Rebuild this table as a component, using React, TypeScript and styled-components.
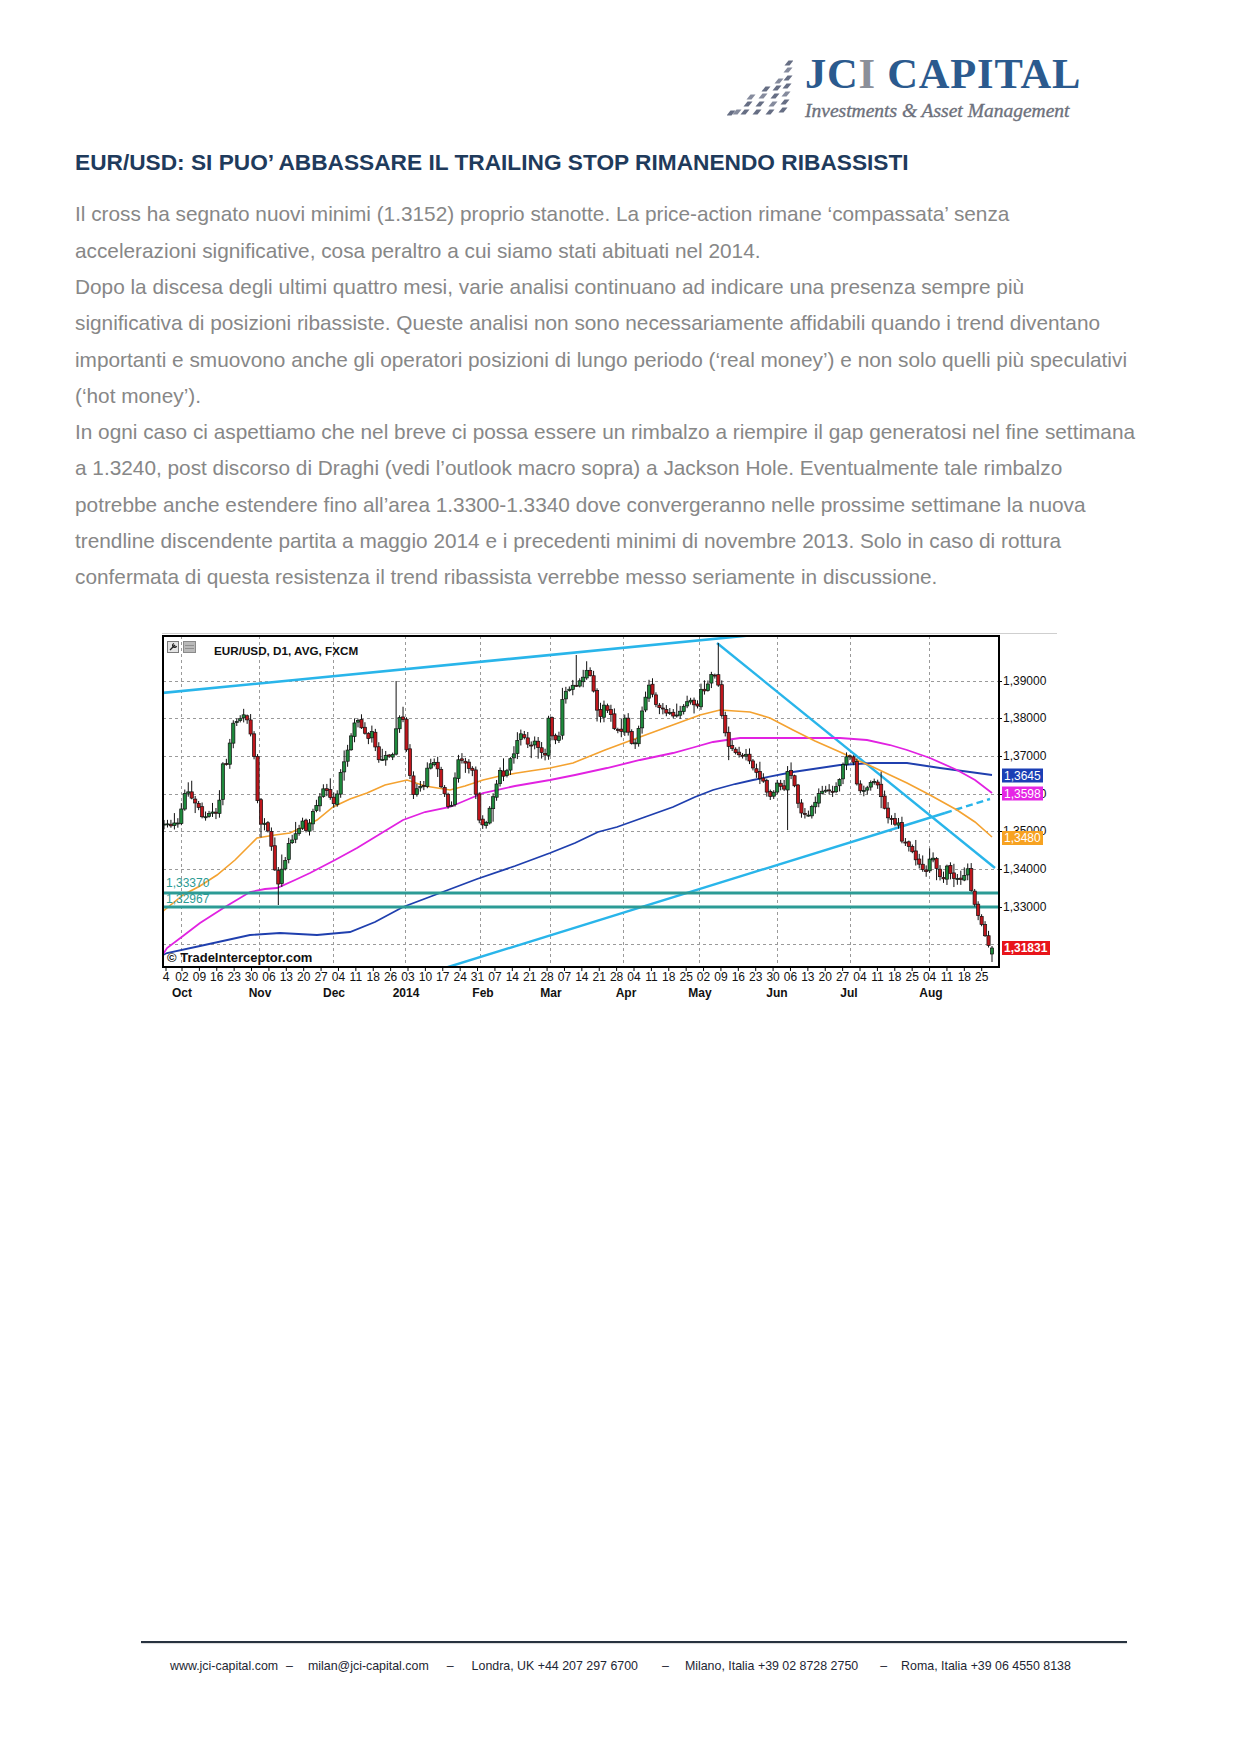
import React from "react";
import styled, { createGlobalStyle } from "styled-components";

const GlobalStyle = createGlobalStyle`
  html, body { margin: 0; padding: 0; background: #fff; }
  body { font-family: "Liberation Sans", Arial, sans-serif; }
`;

const Page = styled.div`
  width: 1240px;
  height: 1754px;
  display: flex;
  flex-direction: column;
  box-sizing: border-box;
  background: #fff;
  overflow: hidden;
`;

const Header = styled.header`
  display: flex;
  align-items: flex-start;
  gap: 12px;
  padding: 53px 0 0 727px;
`;

const LogoMark = styled.svg`
  flex: none;
  margin-top: 5px;
`;

const LogoText = styled.div`
  display: flex;
  flex-direction: column;
`;

const LogoName = styled.div`
  font-family: "Liberation Serif", "Times New Roman", serif;
  font-weight: 700;
  font-size: 42.5px;
  line-height: 42px;
  letter-spacing: 0.8px;
  color: #2b5a8e;
  white-space: nowrap;
`;

const LogoGrey = styled.span`
  color: #8b8f99;
`;

const LogoTag = styled.div`
  margin-top: 5.6px;
  font-family: "Liberation Serif", "Times New Roman", serif;
  font-style: italic;
  font-size: 19.5px;
  line-height: 20px;
  color: #6d717c;
  -webkit-text-stroke: 0.35px #6d717c;
  white-space: nowrap;
`;

const Content = styled.main`
  display: flex;
  flex-direction: column;
  padding-left: 75px;
`;

const Title = styled.h1`
  margin: 28px 0 0;
  font-size: 22.7px;
  line-height: 26px;
  font-weight: 700;
  color: #1f3b5c;
  white-space: nowrap;
`;

const Body = styled.div`
  margin-top: 21.8px;
  font-size: 20.8px;
  line-height: 36.3px;
  color: #878787;
`;

const Paragraph = styled.p`
  margin: 0;
`;

const Line = styled.span`
  display: block;
  white-space: nowrap;
`;

const ChartFigure = styled.figure`
  margin: 37.4px 0 0 87px;
  width: 895px;
  height: 372px;
`;

const Footer = styled.footer`
  margin-top: auto;
  padding: 0 0 81px 141px;
`;

const FooterRule = styled.div`
  width: 986px;
  height: 2px;
  background: #27323f;
  box-shadow: 0 1px 1px rgba(0, 0, 0, 0.15);
`;

const FooterLine = styled.div`
  margin-top: 16px;
  padding-left: 29px;
  display: flex;
  font-size: 12.4px;
  line-height: 14px;
  color: #1e2633;
  white-space: nowrap;
`;

const Sep = styled.span<{ $l: number; $r: number }>`
  margin: 0 ${(p) => p.$r}px 0 ${(p) => p.$l}px;
`;

/* ---------------- chart data ---------------- */

const X0 = 162;
const Y0 = 633;
const W = 895;
const H = 372;

type Pt = [number, number];

const PATH: Pt[] = [
  [163, 823], [165, 825], [170, 827], [175, 823], [180, 820], [183, 800], [187, 787], [192, 800], [195, 802],
  [200, 810], [203, 822], [208, 813], [215, 813], [218, 820], [222, 763], [227, 762], [232, 727], [237, 720],
  [242, 717], [247, 717], [250, 733], [253, 740], [257, 797], [260, 823], [265, 825], [270, 833], [273, 860],
  [278, 883], [282, 867], [287, 853], [290, 840], [297, 833], [302, 817], [307, 833], [313, 810], [318, 802],
  [323, 790], [328, 793], [333, 807], [337, 795], [342, 767], [347, 753], [350, 740], [353, 723], [358, 722],
  [363, 733], [368, 740], [373, 730], [377, 760], [382, 757], [387, 757], [392, 757], [395, 737], [398, 717],
  [403, 717], [405, 737], [410, 777], [413, 793], [418, 785], [423, 790], [427, 770], [432, 763], [437, 763],
  [440, 787], [443, 785], [448, 807], [452, 807], [455, 777], [458, 757], [463, 763], [468, 767], [473, 770],
  [478, 817], [482, 828], [485, 823], [488, 817], [492, 800], [497, 783], [500, 773], [505, 777], [510, 760],
  [515, 750], [520, 733], [525, 740], [530, 747], [535, 740], [540, 753], [545, 757], [548, 717], [553, 738],
  [560, 737], [563, 693], [570, 690], [577, 683], [583, 677], [588, 667], [593, 687], [595, 707], [600, 720],
  [605, 703], [610, 713], [615, 730], [620, 733], [625, 720], [630, 740], [635, 743], [640, 723], [645, 697],
  [650, 683], [655, 702], [660, 710], [670, 712], [675, 717], [680, 710], [687, 702], [692, 697], [697, 712],
  [700, 690], [707, 688], [712, 670], [717, 677], [720, 700], [723, 730], [727, 737], [730, 750], [735, 752],
  [740, 753], [745, 755], [750, 760], [753, 770], [758, 777], [763, 780], [768, 795], [773, 793], [778, 783],
  [783, 793], [788, 770], [793, 777], [797, 797], [800, 812], [805, 815], [810, 812], [815, 803], [820, 792],
  [825, 790], [830, 793], [835, 787], [840, 777], [845, 758], [850, 757], [855, 768], [858, 790], [863, 793],
  [868, 788], [873, 778], [878, 787], [883, 803], [888, 820], [893, 822], [898, 822], [902, 840], [907, 843],
  [912, 852], [917, 860], [922, 867], [927, 870], [930, 858], [935, 860], [938, 878], [943, 878], [948, 865],
  [953, 878], [958, 878], [963, 878], [968, 870], [972, 893], [975, 905], [978, 917], [982, 925], [987, 945],
  [990, 950], [992, 948],
];

const ORANGE: Pt[] = [
  [162, 912], [167, 908], [183, 895], [200, 886], [217, 875], [235, 860], [250, 845], [257, 838], [275, 835],
  [290, 833], [305, 826], [317, 820], [333, 807], [350, 799], [367, 793], [385, 785], [407, 780], [425, 786],
  [450, 790], [465, 786], [483, 780], [500, 776], [517, 773], [530, 771], [550, 768], [573, 763], [605, 750],
  [640, 737], [670, 726], [700, 715], [720, 710], [750, 712], [770, 718], [793, 730], [815, 741], [840, 752],
  [857, 760], [873, 767], [890, 775], [907, 783], [930, 795], [957, 810], [975, 822], [992, 837],
];

const MAGENTA: Pt[] = [
  [162, 956], [167, 948], [183, 936], [200, 923], [225, 907], [250, 892], [265, 889], [277, 888], [295, 880],
  [310, 873], [335, 860], [357, 848], [380, 834], [403, 820], [425, 812], [450, 807], [483, 793], [515, 786],
  [550, 780], [575, 775], [607, 768], [640, 760], [673, 753], [695, 747], [713, 742], [740, 738], [790, 738],
  [840, 738], [867, 740], [890, 745], [907, 750], [930, 758], [957, 770], [975, 780], [992, 793],
];

const BLUE: Pt[] = [
  [163, 955], [167, 953], [200, 946], [250, 935], [280, 933], [317, 935], [350, 932], [375, 922], [403, 907],
  [440, 893], [477, 879], [515, 866], [550, 853], [575, 843], [598, 832], [617, 827], [645, 817], [673, 807],
  [695, 797], [713, 790], [735, 784], [753, 780], [793, 772], [840, 765], [873, 763], [907, 763], [940, 768],
  [970, 772], [992, 775],
];

const H_GRID = [681, 718, 756, 794, 831, 869, 907, 944];
const V_GRID = [181, 259, 333, 405, 480, 550, 623, 699, 777, 850, 929];

const PRICES: [string, number][] = [
  ["1,39000", 681], ["1,38000", 718], ["1,37000", 756], ["1,36000", 794],
  ["1,35000", 831], ["1,34000", 869], ["1,33000", 907],
];

const DATES = [
  "4", "02", "09", "16", "23", "30", "06", "13", "20", "27", "04", "11", "18", "26", "03", "10", "17", "24",
  "31", "07", "14", "21", "28", "07", "14", "21", "28", "04", "11", "18", "25", "02", "09", "16", "23", "30",
  "06", "13", "20", "27", "04", "11", "18", "25", "04", "11", "18", "25",
];

const dateX = (i: number) => (i === 0 ? 166 : 182 + (i - 1) * 17.385);

const MONTHS: [string, number][] = [
  ["Oct", 182], ["Nov", 260], ["Dec", 334], ["2014", 406], ["Feb", 483], ["Mar", 551],
  ["Apr", 626], ["May", 700], ["Jun", 777], ["Jul", 849], ["Aug", 931],
];

const TAGS: { text: string; y: number; fill: string; w: number; bold?: boolean }[] = [
  { text: "1,3645", y: 775.5, fill: "#1b3fb5", w: 41 },
  { text: "1,3598", y: 793.5, fill: "#e526e5", w: 41 },
  { text: "1,3480", y: 838, fill: "#f7a221", w: 41 },
  { text: "1,31831", y: 948, fill: "#e8141a", w: 48, bold: true },
];

function interp(path: Pt[], x: number): number {
  if (x <= path[0][0]) return path[0][1];
  for (let i = 1; i < path.length; i++) {
    const [x1, y1] = path[i];
    const [x0, y0] = path[i - 1];
    if (x <= x1) return y0 + ((y1 - y0) * (x - x0)) / (x1 - x0 || 1);
  }
  return path[path.length - 1][1];
}

function mulberry(seed: number) {
  let s = seed;
  return () => {
    s = (s + 0x6d2b79f5) | 0;
    let t = Math.imul(s ^ (s >>> 15), 1 | s);
    t = (t + Math.imul(t ^ (t >>> 7), 61 | t)) ^ t;
    return ((t ^ (t >>> 14)) >>> 0) / 4294967296;
  };
}

type Candle = { x: number; o: number; c: number; hi: number; lo: number };

function buildCandles(): Candle[] {
  const N = 240;
  const r = mulberry(11);
  const out: Candle[] = [];
  let prev = interp(PATH, 164);
  for (let i = 0; i < N; i++) {
    const x = 164 + (i * (992 - 164)) / (N - 1);
    let c = interp(PATH, x) + (r() - 0.5) * 5;
    c = Math.min(964, Math.max(642, c));
    const o = prev + (r() - 0.5) * 2;
    const top = Math.min(o, c);
    const bot = Math.max(o, c);
    const hi = top - (1 + r() * 5 + (r() < 0.15 ? r() * 10 : 0));
    const lo = bot + (1 + r() * 5 + (r() < 0.15 ? r() * 10 : 0));
    out.push({ x, o, c, hi, lo });
    prev = c;
  }
  const near = (x: number) => out.reduce((b, k, i) => (Math.abs(k.x - x) < Math.abs(out[b].x - x) ? i : b), 0);
  out[near(395)].hi = 681;
  out[near(717)].hi = 643;
  out[near(578)].hi = 655;
  out[near(787)].lo = 830;
  out[near(278)].lo = 905;
  const last = out[out.length - 1];
  last.o = 954;
  last.c = 948;
  last.hi = 946;
  last.lo = 962;
  return out;
}

const CANDLES = buildCandles();

const toPoints = (p: Pt[]) => p.map(([x, y]) => `${x},${y}`).join(" ");

const FONT = "Liberation Sans, Arial, sans-serif";

function PriceChart() {
  return (
    <svg width={W} height={H} viewBox={`${X0} ${Y0} ${W} ${H}`} style={{ display: "block" }}>
      <defs>
        <clipPath id="plot">
          <rect x={163} y={636} width={836} height={331} />
        </clipPath>
      </defs>
      <rect x={X0} y={Y0} width={W} height={H} fill="#fff" />
      <line x1={X0} y1={633.5} x2={1057} y2={633.5} stroke="#cfcfcf" strokeWidth={1} />

      {/* grid */}
      <g stroke="#9a9a9a" strokeWidth={1} strokeDasharray="3 3">
        {H_GRID.map((y) => (
          <line key={"h" + y} x1={163} y1={y + 0.5} x2={999} y2={y + 0.5} />
        ))}
        {V_GRID.map((x) => (
          <line key={"v" + x} x1={x + 0.5} y1={636} x2={x + 0.5} y2={967} />
        ))}
      </g>

      <g clipPath="url(#plot)">
        {/* trend lines */}
        <line x1={162} y1={693} x2={754} y2={635} stroke="#29b5ea" strokeWidth={2.6} />
        <line x1={717} y1={643} x2={995} y2={868} stroke="#29b5ea" strokeWidth={2.4} />
        <line x1={445} y1={968} x2={945} y2={813} stroke="#29b5ea" strokeWidth={2.4} />
        <line x1={945} y1={813} x2={990} y2={799} stroke="#29b5ea" strokeWidth={2.4} strokeDasharray="7 4" />

        {/* moving averages */}
        <polyline points={toPoints(BLUE)} fill="none" stroke="#1f3fae" strokeWidth={1.8} />
        <polyline points={toPoints(MAGENTA)} fill="none" stroke="#e122e1" strokeWidth={1.8} />
        <polyline points={toPoints(ORANGE)} fill="none" stroke="#f4a230" strokeWidth={1.6} />

        {/* support lines */}
        <line x1={163} y1={893} x2={999} y2={893} stroke="#2c9b95" strokeWidth={3} />
        <line x1={163} y1={907} x2={999} y2={907} stroke="#2c9b95" strokeWidth={3} />

        {/* candles */}
        {CANDLES.map((k, i) => {
          const top = Math.min(k.o, k.c);
          const h = Math.max(1, Math.abs(k.o - k.c));
          const up = k.c < k.o;
          return (
            <g key={i}>
              <line x1={k.x} y1={k.hi} x2={k.x} y2={k.lo} stroke="#111" strokeWidth={1} />
              <rect
                x={k.x - 1.6}
                y={top}
                width={3.2}
                height={h}
                fill={up ? "#1e8a3c" : "#bf161c"}
                stroke="#111"
                strokeWidth={0.7}
              />
            </g>
          );
        })}
      </g>

      {/* support labels */}
      <g fontFamily={FONT} fontSize={12} fill="#2c9b95">
        <text x={166} y={887}>1,33370</text>
        <text x={166} y={903}>1,32967</text>
      </g>

      <text x={167} y={962} fontFamily={FONT} fontSize={13} fontWeight={700} fill="#111">
        © TradeInterceptor.com
      </text>

      {/* header icons */}
      <g>
        <rect x={167.5} y={641.5} width={11} height={11} fill="#e4e4e4" stroke="#7a7a7a" />
        <path d="M170 650 L175 645 M174 643.5 a2 2 0 1 0 2.5 2.5" stroke="#222" strokeWidth={1.3} fill="none" />
        <rect x={183.5} y={641.5} width={12} height={11} fill="#b9b9b9" stroke="#8a8a8a" />
        <line x1={185} y1={645.5} x2={194} y2={645.5} stroke="#8f8f8f" />
        <line x1={185} y1={648.5} x2={194} y2={648.5} stroke="#8f8f8f" />
      </g>
      <text x={214} y={655} fontFamily={FONT} fontSize={11.7} fontWeight={700} fill="#111">
        EUR/USD, D1, AVG, FXCM
      </text>

      {/* frame */}
      <rect x={163} y={636} width={836} height={331} fill="none" stroke="#000" strokeWidth={2} />

      {/* axis ticks */}
      <g stroke="#000" strokeWidth={1}>
        {PRICES.map(([, y]) => (
          <line key={"pt" + y} x1={999} y1={y + 0.5} x2={1002} y2={y + 0.5} />
        ))}
        {DATES.map((_, i) => (
          <line key={"dt" + i} x1={dateX(i)} y1={968} x2={dateX(i)} y2={971} />
        ))}
      </g>

      {/* price axis */}
      <g fontFamily={FONT} fontSize={12} fill="#111">
        {PRICES.map(([t, y]) => (
          <text key={t} x={1003} y={y + 4.3}>
            {t}
          </text>
        ))}
      </g>
      {TAGS.map((t) => (
        <g key={t.text}>
          <rect x={1002} y={t.y - 7} width={t.w} height={14} fill={t.fill} />
          <text
            x={1004}
            y={t.y + 4.3}
            fontFamily={FONT}
            fontSize={12}
            fontWeight={t.bold ? 700 : 400}
            fill="#fff"
          >
            {t.text}
          </text>
        </g>
      ))}

      {/* date axis */}
      <g fontFamily={FONT} fontSize={12} fill="#111" textAnchor="middle">
        {DATES.map((d, i) => (
          <text key={"d" + i} x={dateX(i)} y={981.3}>
            {d}
          </text>
        ))}
      </g>
      <g fontFamily={FONT} fontSize={12} fontWeight={700} fill="#111" textAnchor="middle">
        {MONTHS.map(([m, x]) => (
          <text key={m} x={x} y={996.5}>
            {m}
          </text>
        ))}
      </g>
    </svg>
  );
}

/* ---------------- logo mark ---------------- */

const MARK_TILES: Pt[] = [
  [4, 55], [10, 54],
  [18, 54], [21, 46], [24, 39],
  [30, 54], [33, 46], [36, 38], [39, 31],
  [43, 54], [46, 46], [48, 38], [50, 30], [52, 23],
  [56, 52], [58, 44], [59, 36], [60, 28], [61, 20], [61, 12], [62, 5],
];

function JciMark() {
  return (
    <LogoMark width={66} height={58} viewBox="0 0 66 58">
      {MARK_TILES.map(([x, y], i) => (
        <polygon
          key={i}
          points={`${x - 4.5},${y + 2.6} ${x + 0.5},${y + 2.6} ${x + 4.5},${y - 2.6} ${x - 0.5},${y - 2.6}`}
          fill={i % 3 === 1 ? "#858b9d" : "#666e84"}
        />
      ))}
    </LogoMark>
  );
}

export default function App() {
  return (
    <>
      <GlobalStyle />
      <Page>
        <Header>
          <JciMark />
          <LogoText>
            <LogoName>
              JC<LogoGrey>I</LogoGrey> CAPITAL
            </LogoName>
            <LogoTag>Investments &amp; Asset Management</LogoTag>
          </LogoText>
        </Header>

        <Content>
          <Title>EUR/USD: SI PUO’ ABBASSARE IL TRAILING STOP RIMANENDO RIBASSISTI</Title>
          <Body>
            <Paragraph>
              <Line>
                Il cross ha segnato nuovi minimi (1.3152) proprio stanotte. La price-action rimane ‘compassata’ senza
              </Line>
              <Line>accelerazioni significative, cosa peraltro a cui siamo stati abituati nel 2014.</Line>
            </Paragraph>
            <Paragraph>
              <Line>
                Dopo la discesa degli ultimi quattro mesi, varie analisi continuano ad indicare una presenza sempre più
              </Line>
              <Line>
                significativa di posizioni ribassiste. Queste analisi non sono necessariamente affidabili quando i trend diventano
              </Line>
              <Line>
                importanti e smuovono anche gli operatori posizioni di lungo periodo (‘real money’) e non solo quelli più speculativi
              </Line>
              <Line>(‘hot money’).</Line>
            </Paragraph>
            <Paragraph>
              <Line>
                In ogni caso ci aspettiamo che nel breve ci possa essere un rimbalzo a riempire il gap generatosi nel fine settimana
              </Line>
              <Line>
                a 1.3240, post discorso di Draghi (vedi l’outlook macro sopra) a Jackson Hole. Eventualmente tale rimbalzo
              </Line>
              <Line>
                potrebbe anche estendere fino all’area 1.3300-1.3340 dove convergeranno nelle prossime settimane la nuova
              </Line>
              <Line>
                trendline discendente partita a maggio 2014 e i precedenti minimi di novembre 2013. Solo in caso di rottura
              </Line>
              <Line>confermata di questa resistenza il trend ribassista verrebbe messo seriamente in discussione.</Line>
            </Paragraph>
          </Body>
          <ChartFigure>
            <PriceChart />
          </ChartFigure>
        </Content>

        <Footer>
          <FooterRule />
          <FooterLine>
            <span>www.jci-capital.com</span>
            <Sep $l={8} $r={15}>–</Sep>
            <span>milan@jci-capital.com</span>
            <Sep $l={18} $r={18}>–</Sep>
            <span>Londra, UK +44 207 297 6700</span>
            <Sep $l={24} $r={16}>–</Sep>
            <span>Milano, Italia +39 02 8728 2750</span>
            <Sep $l={22} $r={14}>–</Sep>
            <span>Roma, Italia +39 06 4550 8138</span>
          </FooterLine>
        </Footer>
      </Page>
    </>
  );
}
